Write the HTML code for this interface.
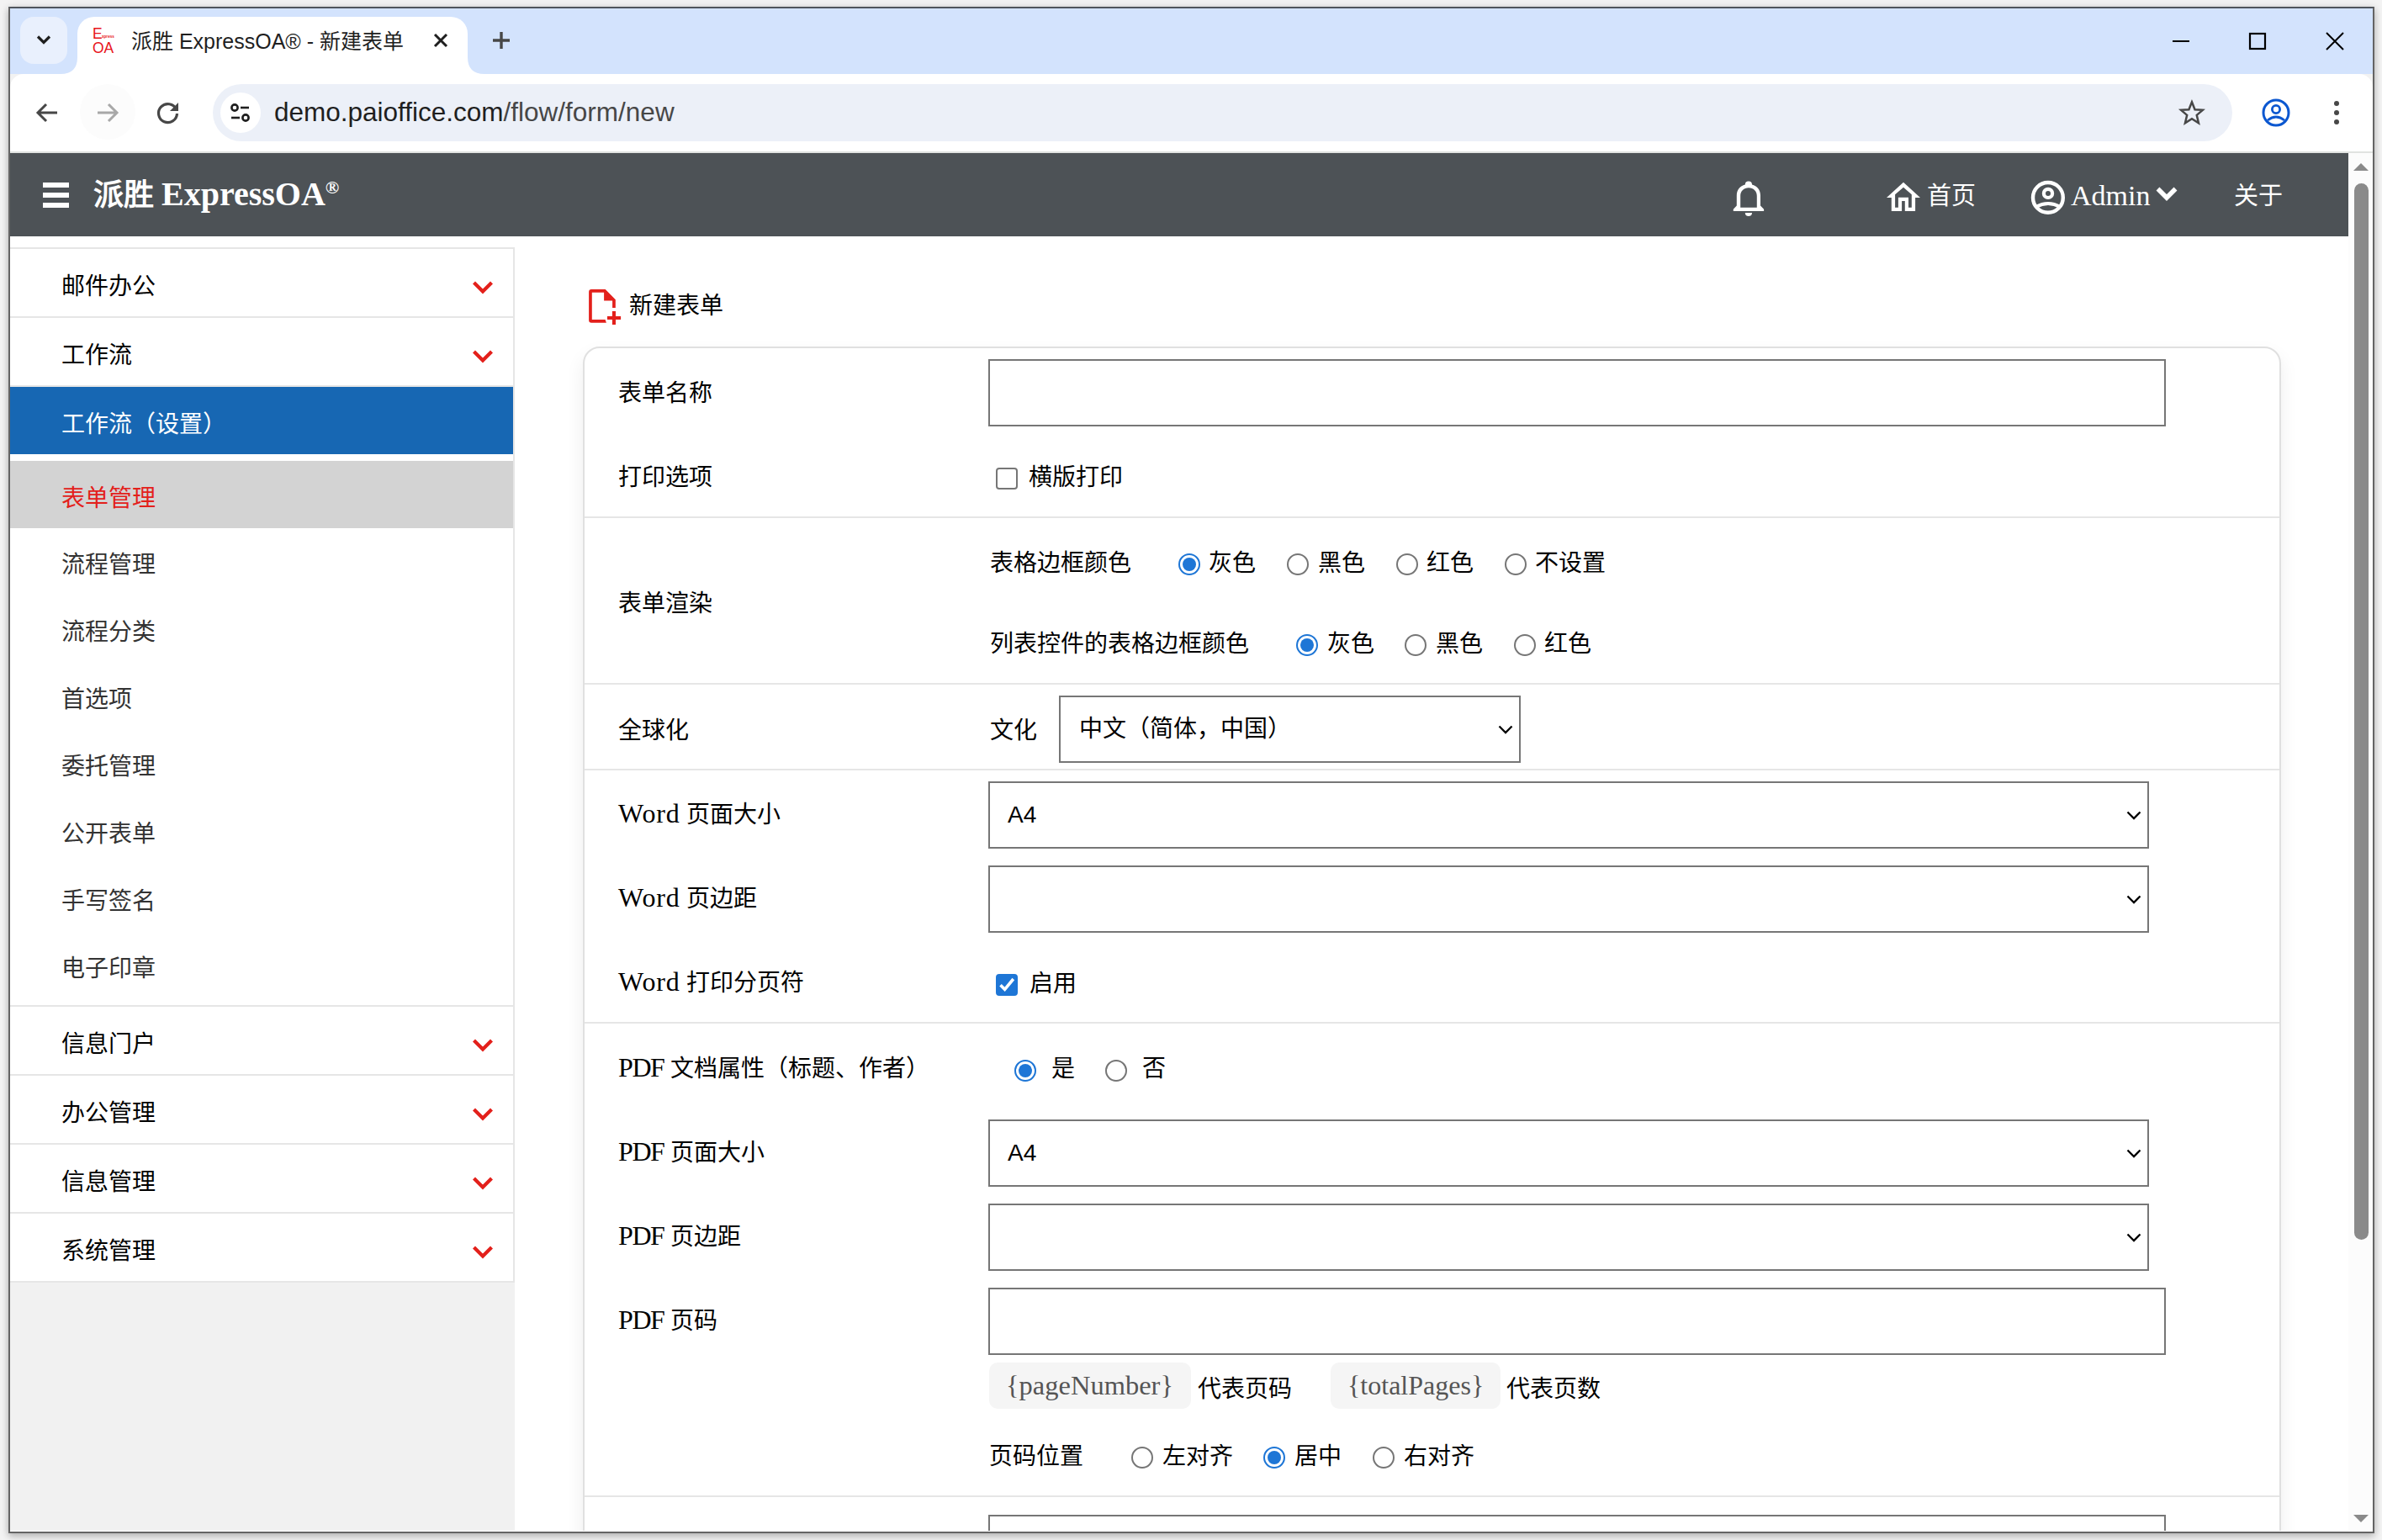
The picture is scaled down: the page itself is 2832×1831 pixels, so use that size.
<!DOCTYPE html>
<html lang="zh-CN">
<head>
<meta charset="utf-8">
<style>
*{box-sizing:border-box;margin:0;padding:0}
html,body{width:2832px;height:1831px;overflow:hidden;background:#f2f2f2;font-family:"Liberation Serif",serif;color:#000}
div,svg{position:absolute}
.t{height:40px;line-height:40px;white-space:nowrap;font-size:28px}
.L{font-size:32px;letter-spacing:0.8px}
.sans{font-family:"Liberation Sans",sans-serif}
.radio{width:26px;height:26px;border:2px solid #767676;border-radius:50%;background:#fff}
.radio.on{border-color:#1e76d6}
.radio.on::after{content:"";position:absolute;left:3px;top:3px;width:16px;height:16px;border-radius:50%;background:#1e76d6}
.cb{width:26px;height:26px;border:2px solid #767676;border-radius:4px;background:#fff}
.cb.on{background:#1e76d6;border-color:#1e76d6}
.inp{border:2px solid #767676;background:#fff}
.sep{left:695px;width:2015px;height:2px;background:#e6e6e6}
</style>
</head>
<body>

<div style="left:12px;top:10px;width:2809px;height:78px;background:#d3e3fd"></div>
<div style="left:24px;top:20px;width:56px;height:56px;border-radius:16px;background:#e9f0fd"></div>
<svg style="left:40px;top:36px" width="24" height="22" viewBox="0 0 24 22"><path d="M5 7.5 L12 14.5 L19 7.5" fill="none" stroke="#1f1f1f" stroke-width="3.2"/></svg>
<div style="left:92px;top:20px;width:464px;height:70px;background:#fff;border-radius:20px 20px 0 0"></div>
<svg style="left:72px;top:68px" width="20" height="20" viewBox="0 0 20 20"><path d="M0 20 Q20 20 20 0 L20 20 Z" fill="#fff"/></svg>
<svg style="left:556px;top:68px" width="20" height="20" viewBox="0 0 20 20"><path d="M20 20 Q0 20 0 0 L0 20 Z" fill="#fff"/></svg>
<div class="sans" style="left:110px;top:31px;width:30px;height:40px;color:#e8141b">
  <div style="left:0;top:0;font-size:17.5px;line-height:18px">E</div>
  <div style="left:11px;top:10px;font-size:4.6px;line-height:6px;font-weight:bold">xpress</div>
  <div style="left:0;top:16px;font-size:17.5px;line-height:20px">OA</div>
</div>
<div class="t sans" style="left:156px;top:29px;font-size:25px;color:#1f1f1f">派胜 ExpressOA® - 新建表单</div>
<svg style="left:512px;top:36px" width="24" height="24" viewBox="0 0 24 24"><path d="M5 5 L19 19 M19 5 L5 19" stroke="#1f1f1f" stroke-width="3"/></svg>
<svg style="left:583px;top:35px" width="26" height="26" viewBox="0 0 26 26"><path d="M13 3 V23 M3 13 H23" stroke="#474747" stroke-width="3.4"/></svg>
<svg style="left:2578px;top:34px" width="30" height="30" viewBox="0 0 30 30"><path d="M5 15 H25" stroke="#000" stroke-width="2"/></svg>
<svg style="left:2670px;top:35px" width="30" height="30" viewBox="0 0 30 30"><rect x="5" y="5" width="18" height="18" fill="none" stroke="#000" stroke-width="2.2"/></svg>
<svg style="left:2762px;top:35px" width="30" height="30" viewBox="0 0 30 30"><path d="M4 4 L24 24 M24 4 L4 24" stroke="#000" stroke-width="2"/></svg>
<div style="left:12px;top:88px;width:2809px;height:92px;background:#fff;border-radius:16px 16px 0 0"></div>
<div style="left:12px;top:180px;width:2809px;height:2px;background:#e1e3e1"></div>
<svg style="left:40px;top:118px" width="32" height="32" viewBox="0 0 32 32"><path d="M28 16 H6 M15 6 L5 16 L15 26" fill="none" stroke="#474747" stroke-width="3"/></svg>
<div style="left:95px;top:100px;width:66px;height:66px;border-radius:50%;background:#fcfcfc"></div>
<svg style="left:112px;top:118px" width="32" height="32" viewBox="0 0 32 32"><path d="M4 16 H26 M17 6 L27 16 L17 26" fill="none" stroke="#a8a8a8" stroke-width="3"/></svg>
<svg style="left:184px;top:118px" width="32" height="32" viewBox="0 0 32 32"><path d="M25.5 12 A11 11 0 1 0 26.5 17" fill="none" stroke="#474747" stroke-width="3.2"/><path d="M28 4 V14 H18 Z" fill="#474747"/></svg>
<div style="left:253px;top:100px;width:2401px;height:68px;border-radius:34px;background:#ecf0f8"></div>
<div style="left:262px;top:110px;width:48px;height:48px;border-radius:50%;background:#fff"></div>
<svg style="left:270px;top:118px" width="32" height="32" viewBox="0 0 32 32"><circle cx="9" cy="10" r="3.6" fill="none" stroke="#1f1f1f" stroke-width="2.6"/><path d="M16 10 H26" stroke="#1f1f1f" stroke-width="2.6"/><circle cx="22" cy="22" r="3.6" fill="none" stroke="#1f1f1f" stroke-width="2.6"/><path d="M5 22 H15" stroke="#1f1f1f" stroke-width="2.6"/></svg>
<div class="t sans" style="left:326px;top:113px;font-size:31.5px;color:#1f1f1f">demo.paioffice.com<span style="color:#474747">/flow/form/new</span></div>
<svg style="left:2588px;top:116px" width="36" height="36" viewBox="-2.2 -2.5 40.5 40.5"><path d="M18 3.5 L22 13.5 L32.5 14.2 L24.5 21 L27 31.5 L18 25.8 L9 31.5 L11.5 21 L3.5 14.2 L14 13.5 Z" fill="none" stroke="#474747" stroke-width="2.8"/></svg>
<svg style="left:2688px;top:116px" width="36" height="36" viewBox="0 0 36 36"><circle cx="18" cy="18" r="15" fill="none" stroke="#0b57d0" stroke-width="3"/><circle cx="18" cy="14" r="4.6" fill="none" stroke="#0b57d0" stroke-width="2.8"/><path d="M8 27 Q18 19 28 27" fill="none" stroke="#0b57d0" stroke-width="2.8"/></svg>
<div style="left:2775px;top:120px;width:6px;height:6px;border-radius:50%;background:#474747"></div>
<div style="left:2775px;top:131px;width:6px;height:6px;border-radius:50%;background:#474747"></div>
<div style="left:2775px;top:142px;width:6px;height:6px;border-radius:50%;background:#474747"></div>
<div style="left:12px;top:182px;width:2780px;height:1640px;background:#fff"></div>
<div style="left:12px;top:182px;width:2780px;height:99px;background:#4d5256"></div>
<div style="left:51px;top:217px;width:31px;height:6px;background:#fff"></div>
<div style="left:51px;top:229px;width:31px;height:6px;background:#fff"></div>
<div style="left:51px;top:241px;width:31px;height:6px;background:#fff"></div>
<div class="t" style="left:111px;top:206px;height:50px;line-height:50px;font-size:36px;font-weight:bold;color:#fff">派胜 <span style="font-size:40px">ExpressOA<sup style="font-size:22px;vertical-align:14px;line-height:0">®</sup></span></div>
<svg style="left:2052px;top:208px" width="54" height="54" viewBox="0 0 54 54"><path fill="#fff" fill-rule="evenodd" d="M22.8 11.6 A4.1 4.1 0 0 1 31 11.6 C37 13 41 18 41 24.5 V36.6 L45.1 40.8 V43 H8.8 V40.8 L12.8 36.6 V24.5 C12.8 18 16.8 13 22.8 11.6 Z M17.2 38.7 H36.8 V25 C36.8 19.2 32.6 15.3 27 15.3 C21.4 15.3 17.2 19.2 17.2 25 Z"/><path fill="#fff" d="M22.8 44.9 H31 A4.1 4.1 0 0 1 22.8 44.9 Z"/></svg>
<svg style="left:2236px;top:210px" width="54" height="48" viewBox="0 0 54 48"><path fill="#fff" fill-rule="evenodd" d="M27 6.7 L7 25 H12.8 V41.1 H25.1 V29.1 H28.8 V41.1 H41.1 V25 H47 Z M27 12.8 L17.1 21.2 V36.8 H20.9 V24.8 H33 V36.8 H36.8 V21.2 Z"/></svg>
<div class="t" style="left:2291px;top:213.0px;color:#fff;font-size:29px;">首页</div>
<svg style="left:2408px;top:208px" width="54" height="54" viewBox="0 0 54 54"><circle cx="26.9" cy="26.9" r="17.9" fill="none" stroke="#fff" stroke-width="4.4"/><circle cx="27" cy="21.9" r="5.1" fill="none" stroke="#fff" stroke-width="4.2"/><path d="M12.5 38 Q27 30 41.5 38" fill="none" stroke="#fff" stroke-width="4.2"/></svg>
<div class="t" style="left:2462px;top:212.5px;color:#fff;font-size:34px">Admin</div>
<svg style="left:2561px;top:216px" width="30" height="28" viewBox="0 0 30 28"><path d="M4.5 8.5 L15 19 L25.5 8.5" fill="none" stroke="#fff" stroke-width="5.5"/></svg>
<div class="t" style="left:2656px;top:213.0px;color:#fff;font-size:29px;">关于</div>
<div style="left:12px;top:294px;width:600px;height:1528px;background:#f1f1f1"></div>
<div style="left:610px;top:294px;width:2px;height:1231px;background:#e6e6e6"></div>
<div style="left:12px;top:294px;width:598px;height:2px;background:#e6e6e6"></div>
<div style="left:12px;top:296px;width:598px;height:80px;background:#fff"></div><div style="left:12px;top:376px;width:598px;height:2px;background:#e6e6e6"></div><div class="t" style="left:73px;top:320.5px;color:#000;font-size:28px;">邮件办公</div><svg style="left:560px;top:330px" width="28" height="20" viewBox="0 0 28 20"><path d="M3.5 6 L14 16.5 L24.5 6" fill="none" stroke="#e3201b" stroke-width="4.2"/></svg>
<div style="left:12px;top:378px;width:598px;height:80px;background:#fff"></div><div style="left:12px;top:458px;width:598px;height:2px;background:#e6e6e6"></div><div class="t" style="left:73px;top:402.5px;color:#000;font-size:28px;">工作流</div><svg style="left:560px;top:412px" width="28" height="20" viewBox="0 0 28 20"><path d="M3.5 6 L14 16.5 L24.5 6" fill="none" stroke="#e3201b" stroke-width="4.2"/></svg>
<div style="left:12px;top:460px;width:598px;height:735px;background:#fff"></div>
<div style="left:12px;top:460px;width:598px;height:80px;background:#1767b3"></div><div class="t" style="left:73px;top:484.5px;color:#fff;font-size:28px;">工作流（设置）</div>
<div style="left:12px;top:548px;width:598px;height:80px;background:#d3d3d3"></div><div class="t" style="left:73px;top:572.5px;color:#e3201b;font-size:28px;">表单管理</div>
<div class="t" style="left:73px;top:651.5px;color:#333;font-size:28px;">流程管理</div>
<div class="t" style="left:73px;top:731.5px;color:#333;font-size:28px;">流程分类</div>
<div class="t" style="left:73px;top:811.5px;color:#333;font-size:28px;">首选项</div>
<div class="t" style="left:73px;top:891.5px;color:#333;font-size:28px;">委托管理</div>
<div class="t" style="left:73px;top:971.5px;color:#333;font-size:28px;">公开表单</div>
<div class="t" style="left:73px;top:1051.5px;color:#333;font-size:28px;">手写签名</div>
<div class="t" style="left:73px;top:1131.5px;color:#333;font-size:28px;">电子印章</div>
<div style="left:12px;top:1195px;width:598px;height:2px;background:#e6e6e6"></div>
<div style="left:12px;top:1197px;width:598px;height:80px;background:#fff"></div><div style="left:12px;top:1277px;width:598px;height:2px;background:#e6e6e6"></div><div class="t" style="left:73px;top:1221.5px;color:#000;font-size:28px;">信息门户</div><svg style="left:560px;top:1231px" width="28" height="20" viewBox="0 0 28 20"><path d="M3.5 6 L14 16.5 L24.5 6" fill="none" stroke="#e3201b" stroke-width="4.2"/></svg>
<div style="left:12px;top:1279px;width:598px;height:80px;background:#fff"></div><div style="left:12px;top:1359px;width:598px;height:2px;background:#e6e6e6"></div><div class="t" style="left:73px;top:1303.5px;color:#000;font-size:28px;">办公管理</div><svg style="left:560px;top:1313px" width="28" height="20" viewBox="0 0 28 20"><path d="M3.5 6 L14 16.5 L24.5 6" fill="none" stroke="#e3201b" stroke-width="4.2"/></svg>
<div style="left:12px;top:1361px;width:598px;height:80px;background:#fff"></div><div style="left:12px;top:1441px;width:598px;height:2px;background:#e6e6e6"></div><div class="t" style="left:73px;top:1385.5px;color:#000;font-size:28px;">信息管理</div><svg style="left:560px;top:1395px" width="28" height="20" viewBox="0 0 28 20"><path d="M3.5 6 L14 16.5 L24.5 6" fill="none" stroke="#e3201b" stroke-width="4.2"/></svg>
<div style="left:12px;top:1443px;width:598px;height:80px;background:#fff"></div><div style="left:12px;top:1523px;width:598px;height:2px;background:#e6e6e6"></div><div class="t" style="left:73px;top:1467.5px;color:#000;font-size:28px;">系统管理</div><svg style="left:560px;top:1477px" width="28" height="20" viewBox="0 0 28 20"><path d="M3.5 6 L14 16.5 L24.5 6" fill="none" stroke="#e3201b" stroke-width="4.2"/></svg>
<svg style="left:694px;top:338px" width="50" height="52" viewBox="0 0 50 52"><path fill="#e3201b" fill-rule="evenodd" d="M9.1 6.1 H25.7 L37.8 18.2 V27.9 H34.1 V19.6 H24.1 V9.8 H9.8 V42 H25.6 L26.9 45.7 H9.1 A3 3 0 0 1 6.1 42.7 V9.1 A3 3 0 0 1 9.1 6.1 Z"/><path fill="#e3201b" d="M33.9 31.9 H38 V38 H44.1 V42 H38 V47.9 H33.9 V42 H28 V38 H33.9 Z"/></svg>
<div class="t" style="left:748px;top:343.5px;color:#000;font-size:28px;">新建表单</div>
<div style="left:693px;top:412px;width:2019px;height:1500px;border:2px solid #e0e0e0;border-radius:20px;background:#fff;box-shadow:0 10px 22px rgba(0,0,0,.07)"></div>
<div class="t" style="left:735px;top:447.5px;color:#000;font-size:28px;">表单名称</div>
<div class="inp" style="left:1175px;top:427px;width:1400px;height:80px"></div>
<div class="t" style="left:735px;top:547.5px;color:#000;font-size:28px;">打印选项</div>
<div class="cb" style="left:1184px;top:556px"></div>
<div class="t" style="left:1223px;top:547.5px;color:#000;font-size:28px;">横版打印</div>
<div class="sep" style="top:614px"></div>
<div class="t" style="left:735px;top:697.5px;color:#000;font-size:28px;">表单渲染</div>
<div class="t" style="left:1177px;top:649.5px;color:#000;font-size:28px;">表格边框颜色</div>
<div class="radio on" style="left:1401.0px;top:658.0px"></div>
<div class="t" style="left:1437px;top:649.5px;color:#000;font-size:28px;">灰色</div>
<div class="radio" style="left:1529.6px;top:658.0px"></div>
<div class="t" style="left:1567px;top:649.5px;color:#000;font-size:28px;">黑色</div>
<div class="radio" style="left:1659.7px;top:658.0px"></div>
<div class="t" style="left:1696px;top:649.5px;color:#000;font-size:28px;">红色</div>
<div class="radio" style="left:1788.7px;top:658.0px"></div>
<div class="t" style="left:1825px;top:649.5px;color:#000;font-size:28px;">不设置</div>
<div class="t" style="left:1177px;top:745.5px;color:#000;font-size:28px;">列表控件的表格边框颜色</div>
<div class="radio on" style="left:1540.5px;top:754.0px"></div>
<div class="t" style="left:1578px;top:745.5px;color:#000;font-size:28px;">灰色</div>
<div class="radio" style="left:1669.8px;top:754.0px"></div>
<div class="t" style="left:1707px;top:745.5px;color:#000;font-size:28px;">黑色</div>
<div class="radio" style="left:1799.5px;top:754.0px"></div>
<div class="t" style="left:1836px;top:745.5px;color:#000;font-size:28px;">红色</div>
<div class="sep" style="top:812px"></div>
<div class="t" style="left:735px;top:848.5px;color:#000;font-size:28px;">全球化</div>
<div class="t" style="left:1177px;top:848.5px;color:#000;font-size:28px;">文化</div>
<div class="inp" style="left:1259px;top:827px;width:549px;height:80px"></div><svg style="left:1778.0px;top:859.0px" width="24" height="16" viewBox="0 0 24 16"><path d="M4.5 4.5 L12 12 L19.5 4.5" fill="none" stroke="#000" stroke-width="2.3"/></svg><div class="t sans" style="left:1283px;top:847.0px;font-size:28px">中文（简体，中国）</div>
<div class="sep" style="top:914px"></div>
<div class="t" style="left:735px;top:947.0px;color:#000;font-size:28px;"><span class="L">Word</span> 页面大小</div>
<div class="inp" style="left:1175px;top:929px;width:1380px;height:80px"></div><svg style="left:2525.0px;top:961.0px" width="24" height="16" viewBox="0 0 24 16"><path d="M4.5 4.5 L12 12 L19.5 4.5" fill="none" stroke="#000" stroke-width="2.3"/></svg><div class="t sans" style="left:1198px;top:949.0px;font-size:28px">A4</div>
<div class="t" style="left:735px;top:1047.0px;color:#000;font-size:28px;"><span class="L">Word</span> 页边距</div>
<div class="inp" style="left:1175px;top:1029px;width:1380px;height:80px"></div><svg style="left:2525.0px;top:1061.0px" width="24" height="16" viewBox="0 0 24 16"><path d="M4.5 4.5 L12 12 L19.5 4.5" fill="none" stroke="#000" stroke-width="2.3"/></svg>
<div class="t" style="left:735px;top:1147.0px;color:#000;font-size:28px;"><span class="L">Word</span> 打印分页符</div>
<div class="cb on" style="left:1184px;top:1158px"></div><svg style="left:1184px;top:1158px" width="26" height="26" viewBox="0 0 26 26"><path d="M5.5 13.2 L10.6 18.3 L20.8 6" fill="none" stroke="#fff" stroke-width="3.6"/></svg>
<div class="t" style="left:1224px;top:1149.5px;color:#000;font-size:28px;">启用</div>
<div class="sep" style="top:1215px"></div>
<div class="t" style="left:735px;top:1249.0px;color:#000;font-size:28px;"><span class="L" style="letter-spacing:-1.4px">PDF</span> 文档属性（标题、作者）</div>
<div class="radio on" style="left:1206.0px;top:1259.5px"></div>
<div class="t" style="left:1250px;top:1250.5px;color:#000;font-size:28px;">是</div>
<div class="radio" style="left:1314.0px;top:1259.5px"></div>
<div class="t" style="left:1358px;top:1250.5px;color:#000;font-size:28px;">否</div>
<div class="t" style="left:735px;top:1349.0px;color:#000;font-size:28px;"><span class="L" style="letter-spacing:-1.4px">PDF</span> 页面大小</div>
<div class="inp" style="left:1175px;top:1331px;width:1380px;height:80px"></div><svg style="left:2525.0px;top:1363.0px" width="24" height="16" viewBox="0 0 24 16"><path d="M4.5 4.5 L12 12 L19.5 4.5" fill="none" stroke="#000" stroke-width="2.3"/></svg><div class="t sans" style="left:1198px;top:1351.0px;font-size:28px">A4</div>
<div class="t" style="left:735px;top:1449.0px;color:#000;font-size:28px;"><span class="L" style="letter-spacing:-1.4px">PDF</span> 页边距</div>
<div class="inp" style="left:1175px;top:1431px;width:1380px;height:80px"></div><svg style="left:2525.0px;top:1463.0px" width="24" height="16" viewBox="0 0 24 16"><path d="M4.5 4.5 L12 12 L19.5 4.5" fill="none" stroke="#000" stroke-width="2.3"/></svg>
<div class="t" style="left:735px;top:1549.0px;color:#000;font-size:28px;"><span class="L" style="letter-spacing:-1.4px">PDF</span> 页码</div>
<div class="inp" style="left:1175px;top:1531px;width:1400px;height:80px"></div>
<div style="left:1176px;top:1620px;width:240px;height:55px;border-radius:10px;background:#f5f5f5"></div>
<div class="t" style="left:1196px;top:1627.0px;color:#555;font-size:32.5px;">{pageNumber}</div>
<div class="t" style="left:1424px;top:1631.5px;color:#000;font-size:28px;">代表页码</div>
<div style="left:1582px;top:1620px;width:202px;height:55px;border-radius:10px;background:#f5f5f5"></div>
<div class="t" style="left:1602px;top:1627.0px;color:#555;font-size:32px;">{totalPages}</div>
<div class="t" style="left:1791px;top:1631.5px;color:#000;font-size:28px;">代表页数</div>
<div class="t" style="left:1176px;top:1711.5px;color:#000;font-size:28px;">页码位置</div>
<div class="radio" style="left:1345.0px;top:1719.5px"></div>
<div class="t" style="left:1382px;top:1711.5px;color:#000;font-size:28px;">左对齐</div>
<div class="radio on" style="left:1502.0px;top:1719.5px"></div>
<div class="t" style="left:1539px;top:1711.5px;color:#000;font-size:28px;">居中</div>
<div class="radio" style="left:1631.6px;top:1719.5px"></div>
<div class="t" style="left:1669px;top:1711.5px;color:#000;font-size:28px;">右对齐</div>
<div class="sep" style="top:1778px"></div>
<div class="inp" style="left:1175px;top:1801px;width:1400px;height:80px"></div>
<div style="left:2792px;top:182px;width:29px;height:1639px;background:#fcfcfc"></div>
<svg style="left:2796px;top:190px" width="22" height="16" viewBox="0 0 22 16"><path d="M2 13 L11 4 L20 13 Z" fill="#8a8a8a"/></svg>
<div style="left:2799px;top:218px;width:17px;height:1256px;border-radius:9px;background:#8a8a8a"></div>
<svg style="left:2796px;top:1798px" width="22" height="16" viewBox="0 0 22 16"><path d="M2 3 L11 12 L20 3 Z" fill="#8a8a8a"/></svg>
<div style="left:12px;top:1820px;width:2809px;height:1px;background:#fff"></div>
<div style="left:10px;top:8px;width:2813px;height:1815px;border:2px solid #646464;border-top-color:#50555c;box-shadow:0 2px 9px rgba(0,0,0,.22),0 4px 8px rgba(0,0,0,.1),0 0 0 60px #f3f3f3"></div>
</body></html>
